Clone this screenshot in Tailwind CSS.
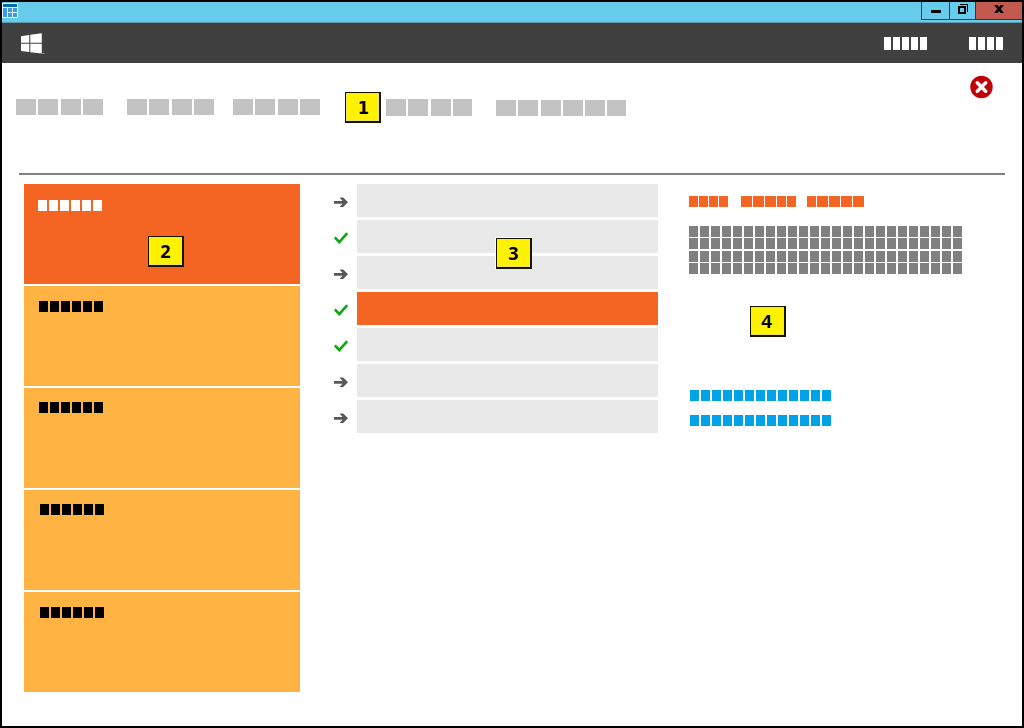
<!DOCTYPE html>
<html lang="en">
<head>
<meta charset="utf-8">
<title>Dashboard layout</title>
<script src="https://cdn.jsdelivr.net/npm/@tailwindcss/browser@4"></script>
</head>
<body class="w-[1024px] h-[728px] overflow-hidden bg-white">
<svg class="hidden">
  <symbol id="arrow" viewBox="0 0 14 10"><path d="M0 4h8.600L5.500.5h3.700L14 5.200 9.200 10H5.500L8.600 6.700H0z" fill="#585858"/></symbol>
  <symbol id="check" viewBox="0 0 14 12"><path d="M.8 5.500 5.300 10 13.200 1.200" fill="none" stroke="#12a512" stroke-width="2.600"/></symbol>
</svg>
<div class="relative flex flex-col w-[1024px] h-[728px] border-2 border-black bg-white">
  <header class="flex justify-between h-[21px] bg-[#67cbec] border-b border-[#6099ab] shrink-0">
    <svg class="mt-px" width="16" height="15" viewBox="0 0 16 15" shape-rendering="crispEdges"><path fill="#e4f5fd" d="M0 0h16v15H0z"/><path fill="#0869a8" d="M1 1h14v3H1z"/><path fill="#3d9ce0" d="M1 5h4v9H1zM6 5h4v4H6zM11 5h4v4h-4zM6 10h4v4H6zM11 10h4v4h-4z"/></svg>
    <div class="flex h-[18px]">
      <div class="w-[28px] border-l border-b border-[#1e3f4a] flex justify-center pt-2"><div class="w-[10px] h-[3px] bg-black"></div></div>
      <div class="w-[26px] border-l border-b border-[#1e3f4a] flex justify-center pt-[2px]">
        <svg width="10" height="10" viewBox="0 0 10 10" shape-rendering="crispEdges" fill="none" stroke="#000"><path d="M1 3h6v6H1z" stroke-width="2"/><path d="M2 .5h7.500V8"/></svg>
      </div>
      <div class="w-[47px] border-l border-b border-[#4b2b2a] bg-[#c35a50] flex justify-center pt-[3px] pr-px">
        <svg width="10" height="8" viewBox="0 0 10 8"><path d="M0 0h3.500L5 2.100 6.500 0H10L6.700 4 10 8H6.500L5 5.900 3.500 8H0l3.300-4z"/></svg>
      </div>
    </div>
  </header>
  <div class="flex h-10 bg-[#404040] shrink-0">
    <svg class="mt-[10px] ml-[19px]" width="24" height="22" viewBox="0 0 24 22"><path fill="#fff" d="M0 3.200 8.300 2v7.800H0zM9.300 1.800 20.800.300v9.500H9.300zM0 10.800h8.300v8.200L0 17.900zM9.300 10.800h11.500V20.500L9.300 19.200z"/><path d="M20 20.500h3.500" stroke="#8b8b8b"/></svg>
    <div class="flex h-[13px] mt-[14px] ml-[839px] [&>i]:bg-white" data-b="7 2 7 2 7 2 7 2 7 42 7 2 7 2 7 2 7"></div>
  </div>

  <nav class="h-[110px] flex items-start pl-[14px] shrink-0">
    <div class="flex h-4 mt-9 [&>i]:bg-[#c3c3c3]" data-b="20 2 20 3 20 2 20 24 20 2 20 3 20 2 20 19 20 2 20 3 20 2 20"></div>
    <div class="ml-[25px] mt-[29px] w-9 h-[31px] bg-[#fff200] border border-[#161300] border-r-2 border-b-2 shadow-[inset_0_0_0_1px_#efe460] pl-[2px] text-center font-['DejaVu_Sans_Condensed','DejaVu_Sans',sans-serif] font-bold text-[18px] leading-[29px]">1</div>
    <div class="flex h-[17px] mt-9 ml-[5px] [&>i]:bg-[#c3c3c3]" data-b="20 2 20 3 20 2 19"></div>
    <div class="flex h-4 mt-[37px] ml-6 [&>i]:bg-[#c3c3c3]" data-b="20 2 20 3 20 2 20 2 20 2 19"></div>
    <svg class="mt-[13px] ml-[344px]" width="23" height="23" viewBox="0 0 23 23"><circle cx="11.500" cy="11" r="11.200" fill="#c00008"/><path d="m7.300 6.800 8.400 8.400m0-8.400-8.400 8.400" stroke="#fff" stroke-width="3.500" stroke-linecap="round"/></svg>
  </nav>
  <div class="ml-[17px] w-[986px] h-[2px] bg-[#808080] shrink-0"></div>

  <main class="flex pl-[22px] pt-[9px]">
    <section class="flex flex-col gap-[2px] w-[276px]">
      <div class="h-[100px] bg-[#f46524] pl-[14px] pt-4">
        <div class="flex h-[11px] [&>i]:bg-white" data-repeat="6"></div>
        <div class="ml-[110px] mt-[25px] w-9 h-[31px] bg-[#fff200] border border-[#161300] border-r-2 border-b-2 shadow-[inset_0_0_0_1px_#efe460] text-center font-['Noto_Sans',sans-serif] font-bold text-[18px] leading-[28px]">2</div>
      </div>
      <div class="h-[100px] bg-[#ffb342] pl-[15px] pt-[15px]"><div class="flex h-[11px] [&>i]:bg-black" data-repeat="6"></div></div>
      <div class="h-[100px] bg-[#ffb342] pl-[15px] pt-[14px]"><div class="flex h-[11px] [&>i]:bg-black" data-repeat="6"></div></div>
      <div class="h-[100px] bg-[#ffb342] pl-4 pt-[14px]"><div class="flex h-[11px] [&>i]:bg-black" data-repeat="6"></div></div>
      <div class="h-[100px] bg-[#ffb342] pl-4 pt-[15px]"><div class="flex h-[11px] [&>i]:bg-black" data-repeat="6"></div></div>
    </section>

    <section class="relative flex flex-col gap-[3px] ml-[34px] w-[324px]">
      <div class="flex h-[33px]"><svg class="mt-[13px] mr-[9px]" width="14" height="10"><use href="#arrow"/></svg><div class="w-[301px] bg-[#e9e9e9]"></div></div>
      <div class="flex h-[33px]"><svg class="mt-3 mr-[9px]" width="14" height="12"><use href="#check"/></svg><div class="w-[301px] bg-[#e9e9e9]"></div></div>
      <div class="flex h-[33px]"><svg class="mt-[13px] mr-[9px]" width="14" height="10"><use href="#arrow"/></svg><div class="w-[301px] bg-[#e9e9e9]"></div></div>
      <div class="flex h-[33px]"><svg class="mt-3 mr-[9px]" width="14" height="12"><use href="#check"/></svg><div class="w-[301px] bg-[#f46524]"></div></div>
      <div class="flex h-[33px]"><svg class="mt-3 mr-[9px]" width="14" height="12"><use href="#check"/></svg><div class="w-[301px] bg-[#e9e9e9]"></div></div>
      <div class="flex h-[33px]"><svg class="mt-[13px] mr-[9px]" width="14" height="10"><use href="#arrow"/></svg><div class="w-[301px] bg-[#e9e9e9]"></div></div>
      <div class="flex h-[33px]"><svg class="mt-[13px] mr-[9px]" width="14" height="10"><use href="#arrow"/></svg><div class="w-[301px] bg-[#e9e9e9]"></div></div>
      <div class="absolute left-[161px] top-[53px] pl-px pt-px bg-white"><div class="w-9 h-[31px] bg-[#fff200] border border-[#161300] border-r-2 border-b-2 shadow-[inset_0_0_0_1px_#efe460] text-center font-['Noto_Sans',sans-serif] font-bold text-[18px] leading-[28px]">3</div></div>
    </section>

    <section class="ml-[31px] pt-3">
      <div class="flex h-[11px] [&>i]:bg-[#f46524]" data-b="9 1 9 1 9 1 9 13 11 1 11 1 11 1 9 1 9 11 11 1 11 1 11 1 11 1 11"></div>
      <div class="flex mt-[19px] h-[11px] [&>i]:bg-[#808080]" data-repeat="25"></div>
      <div class="flex mt-px h-[11px] [&>i]:bg-[#808080]" data-repeat="25"></div>
      <div class="flex mt-[2px] h-[11px] [&>i]:bg-[#808080]" data-repeat="25"></div>
      <div class="flex mt-px h-[11px] [&>i]:bg-[#808080]" data-repeat="25"></div>
      <div class="ml-[61px] mt-8 w-9 h-[31px] bg-[#fff200] border border-[#161300] border-r-2 border-b-2 shadow-[inset_0_0_0_1px_#efe460] pr-[2px] text-center font-['Liberation_Sans',sans-serif] font-bold text-[19px] leading-[29px]">4</div>
      <div class="flex ml-px mt-[53px] h-[11px] [&>i]:bg-[#00a2e8]" data-repeat="13"></div>
      <div class="flex ml-px mt-[14px] h-[11px] [&>i]:bg-[#00a2e8]" data-repeat="13"></div>
    </section>
  </main>
</div>
<script>
// data-b alternates block widths and gaps; data-repeat draws 9px blocks with 2px gaps.
document.querySelectorAll('[data-b],[data-repeat]').forEach(el => {
  const n = el.dataset.repeat ? Array(+el.dataset.repeat * 2 - 1).fill(0).map((_, i) => i % 2 ? 2 : 9)
                              : el.dataset.b.split(' ').map(Number);
  // The last heading word opens with a narrower block.
  if (n.length === 27) n[18] = 9;
  for (let i = 0; i < n.length; i += 2) {
    const b = document.createElement('i');
    b.style.width = n[i] + 'px';
    b.style.flexShrink = 0;
    if (i) b.style.marginLeft = n[i - 1] + 'px';
    el.append(b);
  }
});
</script>
</body>
</html>
